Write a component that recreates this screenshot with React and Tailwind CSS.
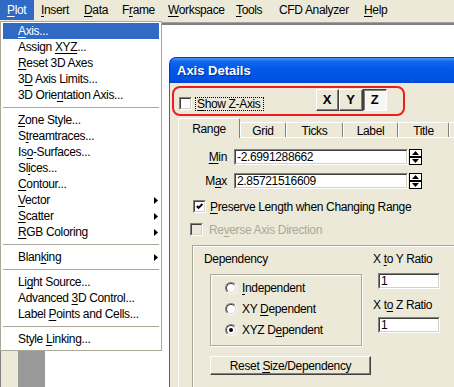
import React from 'react';

const U = ({ children }) => (
  <span className="underline decoration-1 underline-offset-[2px]">{children}</span>
);

const menuBar = [
  { w: 'w-[34px]', label: <><U>P</U>lot</>, active: true },
  { w: 'w-[43px]', label: <><U>I</U>nsert</> },
  { w: 'w-[38px]', label: <><U>D</U>ata</> },
  { w: 'w-[46px]', label: <>F<U>r</U>ame</> },
  { w: 'w-[68px]', label: <><U>W</U>orkspace</> },
  { w: 'w-[43px]', label: <><U>T</U>ools</> },
  { w: 'w-[85px]', label: <>CFD Analyzer</> },
  { w: 'w-[43px]', label: <><U>H</U>elp</> },
];

const plotMenu = [
  { label: <><U>A</U>xis...</>, active: true },
  { label: <>Assign <U>XYZ</U>...</> },
  { label: <><U>R</U>eset 3D Axes</> },
  { label: <>3<U>D</U> Axis Limits...</> },
  { label: <>3D Orie<U>n</U>tation Axis...</> },
  'sep',
  { label: <><U>Z</U>one Style...</> },
  { label: <>S<U>t</U>reamtraces...</> },
  { label: <>Is<U>o</U>-Surfaces...</> },
  { label: <>Sl<U>i</U>ces...</> },
  { label: <><U>C</U>ontour...</> },
  { label: <><U>V</U>ector</>, sub: true },
  { label: <><U>S</U>catter</>, sub: true },
  { label: <><U>R</U>GB Coloring</>, sub: true },
  'sep',
  { label: <>Blan<U>k</U>ing</>, sub: true },
  'sep',
  { label: <>Li<U>g</U>ht Source...</> },
  { label: <>Advanced <U>3</U>D Control...</> },
  { label: <>Label <U>P</U>oints and Cells...</> },
  'sep',
  { label: <>Style <U>L</U>inking...</> },
];

const tabs = [
  { name: 'Grid', w: 'w-[46px]' },
  { name: 'Ticks', w: 'w-[57px]' },
  { name: 'Label', w: 'w-[55px]' },
  { name: 'Title', w: 'w-[51px]' },
];

function MenuBar() {
  return (
    <div className="flex h-[20px] items-stretch bg-[#ece9d8]">
      {menuBar.map((m, i) => (
        <div
          key={i}
          className={`flex items-center pl-[7px] ${m.w} ${m.active ? 'bg-[#316ac5] text-white' : ''}`}
        >
          <span>{m.label}</span>
        </div>
      ))}
    </div>
  );
}

function PlotMenu() {
  return (
    <div className="absolute left-0 top-[21px] h-[330px] w-[162px] border border-[#aca899] bg-white px-[2px] pt-[1px]">
      {plotMenu.map((m, i) =>
        m === 'sep' ? (
          <div key={i} className="h-[9px] pt-[4px]">
            <div className="h-px bg-[#aca899]" />
          </div>
        ) : (
          <div
            key={i}
            className={`flex h-[16px] items-center pl-[15px] ${m.active ? 'bg-[#316ac5] text-white' : ''}`}
          >
            <span className="flex-1">{m.label}</span>
            {m.sub && (
              <svg width="4" height="7" viewBox="0 0 4 7" className="mr-[1px]">
                <polygon points="0,0 4,3.5 0,7" fill="#000" />
              </svg>
            )}
          </div>
        )
      )}
    </div>
  );
}

function Check({ checked, disabled }) {
  return (
    <div className="h-[13px] w-[13px] border border-b-white border-l-[#808080] border-r-white border-t-[#808080]">
      <div
        className={`flex h-full w-full items-center justify-center border border-b-[#d4d0c8] border-l-[#404040] border-r-[#d4d0c8] border-t-[#404040] ${disabled ? 'bg-[#ece9d8]' : 'bg-white'}`}
      >
        {checked && (
          <svg width="7" height="7" viewBox="0 0 7 7">
            <polyline points="0.8,3 2.6,4.9 6.4,1" fill="none" stroke="#000" strokeWidth="1.9" />
          </svg>
        )}
      </div>
    </div>
  );
}

function Radio({ on }) {
  return (
    <div className="h-[12px] w-[12px] rounded-full border border-b-white border-l-[#808080] border-r-white border-t-[#808080]">
      <div className="flex h-full w-full items-center justify-center rounded-full border border-b-[#d4d0c8] border-l-[#404040] border-r-[#d4d0c8] border-t-[#404040] bg-white">
        {on && <div className="h-[4px] w-[4px] rounded-full bg-black" />}
      </div>
    </div>
  );
}

function Field({ value, className }) {
  return (
    <div className={`h-[16px] border border-b-white border-l-[#808080] border-r-white border-t-[#808080] ${className}`}>
      <div className="flex h-full items-center border border-b-[#d4d0c8] border-l-[#404040] border-r-[#d4d0c8] border-t-[#404040] bg-white pl-[1px] text-[12px]">
        {value}
      </div>
    </div>
  );
}

function Spinner() {
  return (
    <svg width="13" height="16" viewBox="0 0 13 16" className="ml-[1px]">
      <rect x="0.5" y="0.5" width="12" height="15" fill="#fff" stroke="#000" />
      <rect x="0" y="7" width="13" height="2" fill="#000" />
      <polygon points="6.5,2 10,6 3,6" fill="#000" />
      <polygon points="3,10 10,10 6.5,14" fill="#000" />
    </svg>
  );
}

function XyzButton({ label, pressed, className }) {
  return (
    <div
      className={`flex h-[22px] items-center justify-center border text-[13px] font-bold ${className} ${
        pressed
          ? 'border-b-white border-l-[#404040] border-r-white border-t-[#404040] bg-[#f7f6f0] shadow-[inset_1px_1px_0_#808080]'
          : 'border-b-[#404040] border-l-white border-r-[#404040] border-t-white bg-[#ece9d8] shadow-[inset_-1px_-1px_0_#808080]'
      }`}
    >
      {label}
    </div>
  );
}

function AxisDialog() {
  return (
    <div className="absolute left-[169px] top-[57px] flex h-[340px] w-[300px] flex-col">
      <div className="flex h-[26px] shrink-0 items-center rounded-tl-[7px] border-l border-t border-[#0831d9] bg-[linear-gradient(180deg,#4a98fb_0%,#1466ee_14%,#0157e7_45%,#0054e3_80%,#0049d4_100%)] pl-[7px] pt-[1px]">
        <span className="text-[13px] font-bold tracking-normal text-white [text-shadow:1px_1px_0_#0a2a8a]">
          Axis Details
        </span>
      </div>
      <div className="flex min-h-0 flex-1">
        <div className="w-[1px] bg-[#0831d9]" />
        <div className="w-[2px] bg-[#1a6cf0]" />
        <div className="flex flex-1 flex-col bg-[#ece9d8] pt-[3px]">
          {/* Show Z-Axis / X Y Z row, circled in red */}
          <div className="ml-[2px] flex h-[30px] w-[233px] shrink-0 items-center rounded-[8px] border-2 border-[#ee1c1c]">
            <div className="ml-[5px] mt-[4px]">
              <Check />
            </div>
            <div className="ml-[3px] mt-[5px] flex h-[14px] items-center border border-dotted border-black pl-[1px] pr-[2px]">
              <span>
                <U>S</U>how Z-Axis
              </span>
            </div>
            <div className="ml-[52px] mt-[-2px] flex">
              <XyzButton label="X" className="w-[23px]" />
              <XyzButton label="Y" className="w-[24px]" />
              <XyzButton label="Z" pressed className="w-[24px]" />
            </div>
          </div>

          {/* tabs */}
          <div className="ml-[8px] mt-[2px] flex h-[19px] shrink-0 items-end">
            <div className="relative z-10 -mb-[1px] flex h-[20px] w-[62px] items-center justify-center rounded-t-[2px] border-l border-r border-t border-l-white border-r-[#808080] border-t-white bg-[#ece9d8]">
              Range
            </div>
            {tabs.map((t) => (
              <div
                key={t.name}
                className={`flex h-[15px] items-center justify-center rounded-t-[2px] border-l border-r border-t border-l-white border-r-[#808080] border-t-white pt-[1px] ${t.w}`}
              >
                {t.name}
              </div>
            ))}
            <div className="h-[15px] w-[20px] rounded-t-[2px] border-l border-t border-white" />
          </div>

          {/* tab page */}
          <div className="ml-[8px] flex-1 border-l border-t border-white">
            <div className="mt-[11px] flex items-center">
              <div className="w-[48px] text-right">
                <U>M</U>in
              </div>
              <Field value="-2.6991288662" className="ml-[7px] w-[174px]" />
              <Spinner />
            </div>
            <div className="mt-[8px] flex items-center">
              <div className="w-[48px] text-right">
                M<U>a</U>x
              </div>
              <Field value="2.85721516609" className="ml-[7px] w-[174px]" />
              <Spinner />
            </div>
            <div className="ml-[14px] mt-[11px] flex h-[13px] items-center">
              <Check checked />
              <span className="ml-[4px]">
                <U>P</U>reserve Length when Changing Range
              </span>
            </div>
            <div className="ml-[11px] mt-[10px] flex h-[13px] items-center">
              <Check disabled />
              <span className="ml-[6px] text-[#aca899]">
                Re<U>v</U>erse Axis Direction
              </span>
            </div>

            {/* etched inner panel */}
            <div className="ml-[13px] mt-[9px] h-[160px] border-l border-t border-[#aca899] shadow-[inset_1px_1px_0_white]">
              <div className="flex pt-[6px]">
                <div className="w-[180px]">
                  <div className="pl-[11px]">Dependency</div>
                  <div className="ml-[17px] mt-[8px] h-[72px] w-[152px] border border-[#aca899] pt-[2px] shadow-[inset_1px_1px_0_white,1px_1px_0_white]">
                    <div className="flex h-[21px] items-center pl-[14px]">
                      <Radio />
                      <span className="ml-[5px]">
                        <U>I</U>ndependent
                      </span>
                    </div>
                    <div className="flex h-[21px] items-center pl-[14px]">
                      <Radio />
                      <span className="ml-[5px]">
                        XY <U>D</U>ependent
                      </span>
                    </div>
                    <div className="flex h-[21px] items-center pl-[14px]">
                      <Radio on />
                      <span className="ml-[5px]">
                        XYZ D<U>e</U>pendent
                      </span>
                    </div>
                  </div>
                  <div className="ml-[17px] mt-[10px] flex h-[19px] w-[161px] items-center justify-center border border-b-[#404040] border-l-white border-r-[#404040] border-t-white shadow-[inset_-1px_-1px_0_#808080]">
                    <span>
                      Reset <U>S</U>ize/Dependency
                    </span>
                  </div>
                </div>
                <div className="flex flex-col">
                  <div>
                    X <U>t</U>o Y Ratio
                  </div>
                  <Field value="1" className="ml-[5px] mt-[7px] w-[62px]" />
                  <div className="mt-[9px]">
                    X t<U>o</U> Z Ratio
                  </div>
                  <Field value="1" className="ml-[5px] mt-[5px] w-[62px]" />
                </div>
              </div>
            </div>
          </div>
        </div>
      </div>
    </div>
  );
}

export default function App() {
  return (
    <div className="relative h-[387px] w-[454px] overflow-hidden bg-white font-['Liberation_Sans',Arial,sans-serif] text-[12px] leading-[14px] tracking-[-0.35px] text-black">
      <MenuBar />
      <div className="h-[2px] bg-[#ece9d8]" />
      <div className="h-[1px] bg-[#a0a0a0]" />
      <div className="h-[2px] bg-[#808080]" />
      <div className="flex h-[362px]">
        <div className="w-[18px] border-l border-[#808080] bg-[#ece9d8]" />
        <div className="w-[27px] bg-[#999999]" />
        <div className="flex-1 bg-white" />
      </div>
      <PlotMenu />
      <AxisDialog />
    </div>
  );
}
